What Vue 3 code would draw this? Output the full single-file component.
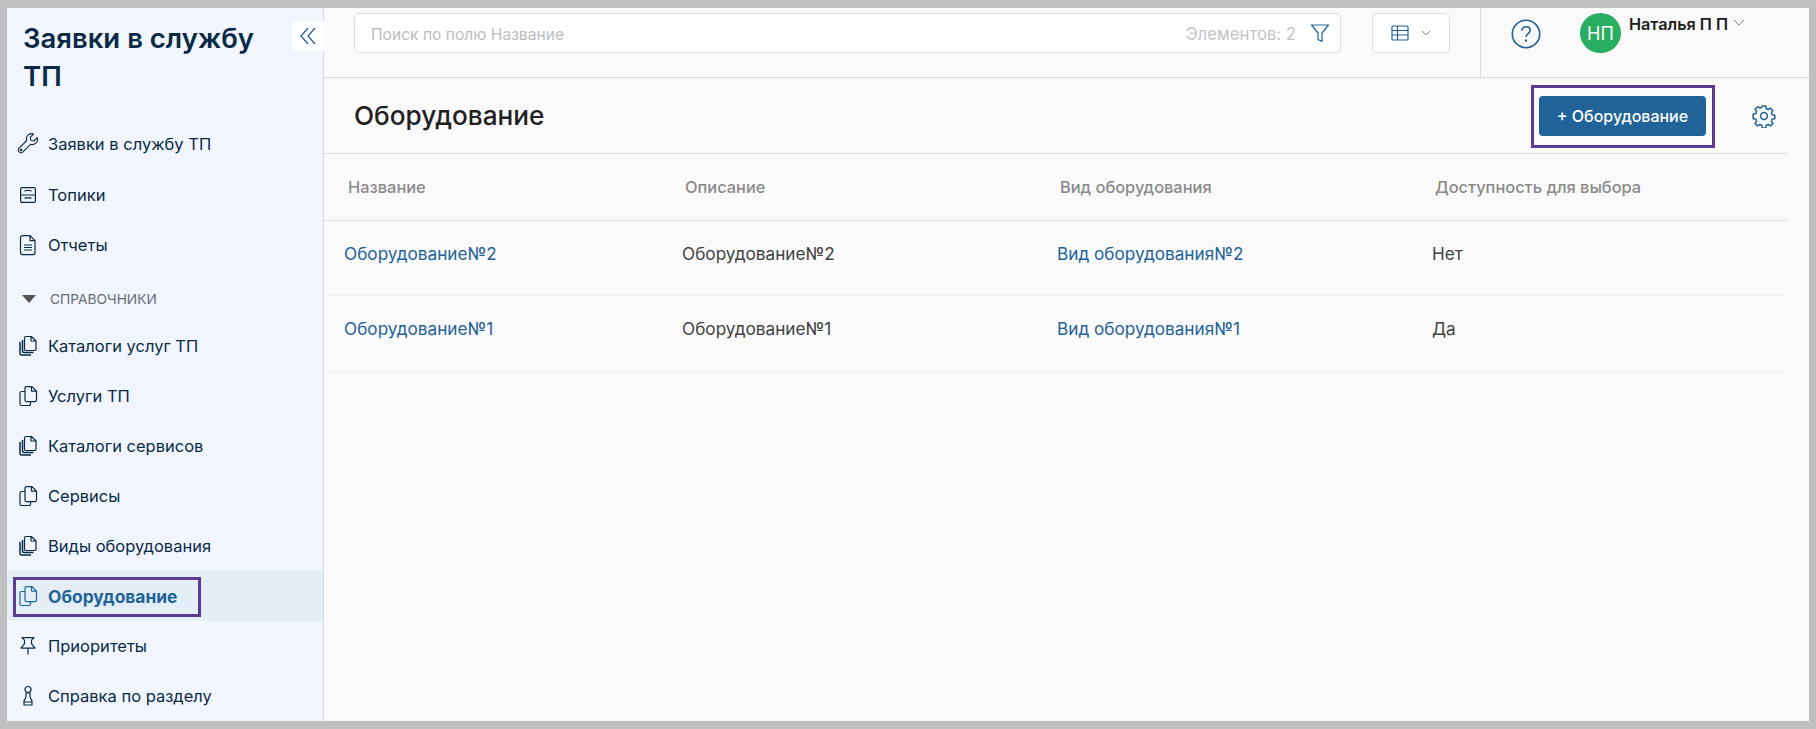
<script setup>
const nav = [
  { label: 'Заявки в службу ТП', icon: 'wrench' },
  { label: 'Топики', icon: 'cabinet' },
  { label: 'Отчеты', icon: 'doc' },
]
const refs = [
  { label: 'Каталоги услуг ТП', icon: 'stack' },
  { label: 'Услуги ТП', icon: 'copy' },
  { label: 'Каталоги сервисов', icon: 'stack' },
  { label: 'Сервисы', icon: 'copy' },
  { label: 'Виды оборудования', icon: 'stack' },
  { label: 'Оборудование', icon: 'copy', active: true },
  { label: 'Приоритеты', icon: 'pin' },
  { label: 'Справка по разделу', icon: 'pawn' },
]
const rows = [
  ['Оборудование№2', 'Оборудование№2', 'Вид оборудования№2', 'Нет'],
  ['Оборудование№1', 'Оборудование№1', 'Вид оборудования№1', 'Да'],
]
</script>

<template>
  <div class="frame">
    <div class="window">
      <aside class="sidebar">
        <h1 class="app-title">Заявки в службу ТП</h1>
        <button class="collapse" aria-label="Свернуть">
          <svg width="16" height="18" viewBox="0 0 16 18" fill="none" stroke="#1f6399" stroke-width="1.3"><path d="M8 1 1 9l7 8M15 1 8 9l7 8" /></svg>
        </button>
        <nav class="nav">
          <template v-for="group in [nav, null, refs]">
            <div v-if="!group" class="section">
              <span class="caret"></span>
              <span>СПРАВОЧНИКИ</span>
            </div>
            <a v-else v-for="item in group" :key="item.label" class="item" :class="{ active: item.active }">
              <span class="ico">
                <svg v-if="item.icon === 'wrench'" width="22" height="22" viewBox="0 0 22 22" fill="none" stroke="currentColor" stroke-width="1.1" stroke-linejoin="round">
                  <path d="M20.2 4.6 16.8 8l-2.9-.7-.7-2.9L16.600 1c-2.400-.7-4.800 0-6 1.500-1.200 1.500-1.500 3.300-.9 5L1.900 15.300a2.300 2.300 0 0 0 0 3.300l.5.5a2.300 2.300 0 0 0 3.300 0l7.800-7.800c1.700.6 3.500.3 5-.9 1.500-1.200 2.400-3.400 1.700-5.800z" />
                  <circle cx="4" cy="17" r=".8" />
                </svg>
                <svg v-else-if="item.icon === 'cabinet'" width="18" height="18" viewBox="0 0 18 18" fill="none" stroke="currentColor" stroke-width="1.200">
                  <rect x="1.600" y="1.600" width="14.800" height="14.800" rx="1.500" />
                  <path d="M1.600 9h14.800M6 4.500h6M6 4.500v1M12 4.500v1M6 11.800h6M6 11.800v1M12 11.800v1" />
                </svg>
                <svg v-else-if="item.icon === 'doc'" width="18" height="22" viewBox="0 0 18 22" fill="none" stroke="currentColor" stroke-width="1.200" stroke-linejoin="round">
                  <path d="M3.500 1.600h7.500l5 5v12a2 2 0 0 1-2 2h-10.500a2 2 0 0 1-2-2v-15a2 2 0 0 1 2-2zM11 1.600v5h5M5 11h8M5 13.500h8M5 16h8" />
                </svg>
                <svg v-else-if="item.icon === 'stack'" width="20" height="22" viewBox="0 0 20 22" fill="none" stroke="currentColor" stroke-width="1.500" stroke-linejoin="round">
                  <path d="M8 1.500h5.500l4.500 4.500v8a1.500 1.500 0 0 1-1.500 1.500H8A1.500 1.500 0 0 1 6.500 14V3A1.500 1.500 0 0 1 8 1.500zM13 1.500V6h5" stroke-width="1.200" />
                  <path d="M4.500 5v11a1.500 1.500 0 0 0 1.500 1.500h9.500" />
                  <path d="M2 7v11.500A1.500 1.500 0 0 0 3.500 20H13" />
                </svg>
                <svg v-else-if="item.icon === 'copy'" width="20" height="22" viewBox="0 0 20 22" fill="none" stroke="currentColor" stroke-width="1.200" stroke-linejoin="round">
                  <path d="M8.500 1.600h5.500l4.500 4.500v9a1.500 1.500 0 0 1-1.500 1.500h-8.500A1.500 1.500 0 0 1 7 15.100V3.100a1.500 1.500 0 0 1 1.500-1.500zM13.500 1.600v4.500h5" />
                  <path d="M7 6.500H3.500A1.500 1.500 0 0 0 2 8v11a1.500 1.500 0 0 0 1.500 1.500h7.500a1.500 1.500 0 0 0 1.500-1.500v-2.400" />
                </svg>
                <svg v-else-if="item.icon === 'pin'" width="18" height="20" viewBox="0 0 18 20" fill="none" stroke="currentColor" stroke-width="1.200" stroke-linejoin="round">
                  <path d="M3 1.600h12l-2.500 2.500v3.500l3.500 4.500H2l3.500-4.500V4.100zM9 12.100v6.500" />
                </svg>
                <svg v-else width="14" height="22" viewBox="0 0 14 22" fill="none" stroke="currentColor" stroke-width="1.200" stroke-linejoin="round">
                  <circle cx="7" cy="4.500" r="3" />
                  <path d="M4.500 8h5M5 8v3.500c0 1.500-1.200 3-2 4.500v4h8v-4c-.8-1.500-2-3-2-4.500V8M3 17h8" />
                </svg>
              </span>
              <span>{{ item.label }}</span>
              <span v-if="item.active" class="mark-item"></span>
            </a>
          </template>
        </nav>
      </aside>

      <main class="main">
        <header class="topbar">
          <div class="search">
            <span class="placeholder">Поиск по полю Название</span>
            <span class="count">Элементов: 2</span>
            <svg width="20" height="20" viewBox="0 0 20 20" fill="none" stroke="#1f6399" stroke-width="1.200" stroke-linejoin="round"><path d="M1.500 2h17l-6.500 8v8.500l-4-2V10z" /></svg>
          </div>
          <button class="view">
            <svg width="18" height="16" viewBox="0 0 18 16" fill="none" stroke="#1f6399" stroke-width="1.200"><rect x="1" y="1" width="16" height="14" rx="1" /><path d="M1 5.500h16M1 10h16M6.500 1v14" /></svg>
            <svg width="10" height="6" viewBox="0 0 10 6" fill="none" stroke="#8a8f94" stroke-width="1"><path d="m1 1 4 4 4-4" /></svg>
          </button>
          <div class="user-zone">
            <svg class="help" width="30" height="30" viewBox="0 0 30 30" fill="none" stroke="#1f6399" stroke-width="1.600">
              <circle cx="15" cy="15" r="13.700" />
              <path d="M10.800 11.800c0-2.600 2-4.100 4.300-4.100 2.400 0 4.100 1.500 4.100 3.600 0 3.300-4.200 3.300-4.200 6.800" />
              <path d="M15 20.500v2.300" stroke-width="2" />
            </svg>
            <div class="avatar">НП</div>
            <div class="username">Наталья П П</div>
            <svg class="uchev" width="12" height="7" viewBox="0 0 12 7" fill="none" stroke="#7d8389" stroke-width="1"><path d="m1 1 5 5 5-5" /></svg>
          </div>
        </header>

        <section class="head">
          <h2 class="page-title">Оборудование</h2>
          <div class="actions">
            <button class="primary">+ Оборудование<span class="mark-btn"></span></button>
            <svg width="24" height="24" viewBox="0 0 24 24" fill="none" stroke="#1f6399" stroke-width="1.500" stroke-linejoin="round">
              <circle cx="12" cy="12" r="3.400" />
              <path d="M10.200 2h3.600l.5 2.700 1.700.8 2.400-1.400 2.500 2.600-1.500 2.300.7 1.800 2.700.5v3.500l-2.700.5-.7 1.800 1.500 2.300-2.500 2.500-2.400-1.400-1.700.8-.5 2.700h-3.600l-.5-2.700-1.700-.8-2.400 1.400-2.500-2.500 1.500-2.300-.7-1.800-2.700-.5V9.900l2.700-.5.700-1.800L3.100 5.300 5.600 2.700 8 4.100l1.700-.8z" />
            </svg>
          </div>
        </section>

        <section class="table">
          <div class="row thead">
            <div>Название</div>
            <div>Описание</div>
            <div>Вид оборудования</div>
            <div>Доступность для выбора</div>
          </div>
          <div v-for="(r, i) in rows" :key="i" class="row tbody">
            <div class="link">{{ r[0] }}</div>
            <div>{{ r[1] }}</div>
            <div class="link">{{ r[2] }}</div>
            <div>{{ r[3] }}</div>
          </div>
        </section>
      </main>
    </div>
  </div>
</template>

<style>
html, body { margin: 0; background: #c0c0c0; }
</style>

<style scoped>
.frame { width: 1816px; height: 729px; box-sizing: border-box; padding: 8px 7px; background: #c0c0c0; font-family: Inter, "Noto Sans", sans-serif; overflow: hidden; }
.window { display: flex; height: 713px; background: #fafafa; }
.sidebar { position: relative; width: 317px; flex: none; box-sizing: border-box; background: #f1f6fe; border-right: 1px solid #d8d8d8; }
.app-title { margin: 0; padding: 11px 40px 0 16px; height: 111px; box-sizing: border-box; font-size: 27.500px; line-height: 38px; font-weight: 600; color: #0b2a45; }
.collapse { position: absolute; right: -1px; top: 13px; width: 32px; height: 30px; display: flex; align-items: center; justify-content: center; padding: 0; border: 0; background: #fff; border-radius: 4px 0 0 4px; }
.nav { display: flex; flex-direction: column; }
.item { position: relative; display: flex; align-items: center; box-sizing: border-box; height: 50px; color: #0b2a45; font-size: 16.500px; }
.item:first-child { height: 51px; padding-bottom: 1px; }
.ico { width: 41px; display: flex; justify-content: center; flex: none; }
.item.active { background: #e3eef7; color: #1f6399; font-size: 17.400px; font-weight: 700; }
.section { display: flex; align-items: center; height: 51px; color: #666d73; font-size: 13.750px; padding-left: 15px; padding-top: 6px; box-sizing: border-box; }
.caret { width: 0; height: 0; border-left: 7px solid transparent; border-right: 7px solid transparent; border-top: 8px solid #555; margin-right: 14px; }
.mark-item { position: absolute; left: 6px; top: 6px; width: 188px; height: 40px; box-sizing: border-box; border: 3px solid #5b3a91; }
.main { flex: 1; display: flex; flex-direction: column; min-width: 0; }
.topbar { display: flex; align-items: flex-start; height: 70px; box-sizing: border-box; border-bottom: 1px solid #dcdcdc; padding: 5px 0 0 30px; }
.search { width: 987px; height: 40px; box-sizing: border-box; display: flex; align-items: center; padding: 2px 10px 0 16px; background: #fff; border: 1px solid #ddd; border-radius: 5px; font-size: 15.600px; }
.search svg { margin-top: -2px; }
.placeholder { flex: 1; color: #bdbdbd; }
.count { color: #c4c4c4; margin-right: 14px; font-size: 16.700px; }
.view { margin-left: 31px; width: 78px; height: 40px; display: flex; align-items: center; justify-content: center; gap: 12px; background: #fff; border: 1px solid #ddd; border-radius: 5px; padding: 0; }
.user-zone { position: relative; margin-left: 30px; height: 69px; margin-top: -5px; width: 320px; border-left: 1px solid #dcdcdc; }
.help { position: absolute; left: 30px; top: 11px; }
.avatar { position: absolute; left: 99px; top: 5px; width: 41px; height: 40px; border-radius: 50%; background: #27ae60; color: #fff; font-size: 18px; display: flex; align-items: center; justify-content: center; }
.username { position: absolute; left: 148px; top: 6px; font-size: 16.200px; font-weight: 600; color: #1c1c1c; line-height: 20px; }
.uchev { position: absolute; left: 252px; top: 11px; }
.head { display: flex; align-items: center; justify-content: space-between; height: 75px; box-sizing: border-box; padding: 0 33px 0 30px; }
.page-title { margin: 0; font-size: 26.200px; font-weight: 500; color: #212121; }
.actions { display: flex; align-items: center; gap: 46px; }
.primary { position: relative; width: 167px; height: 40px; border: 0; border-radius: 4px; background: #1f6399; color: #fff; font: 500 16px Inter, sans-serif; padding: 0; }
.mark-btn { position: absolute; left: -8px; top: -11px; width: 184px; height: 63px; box-sizing: border-box; border: 3px solid #5b3a91; }
.table { margin-right: 22px; }
.row { display: grid; grid-template-columns: 338px 375px 375px 1fr; }
.thead { height: 66px; align-items: center; padding-left: 24px; grid-template-columns: 337px 375px 375px 1fr; border-top: 1px solid #dcdcdc; border-bottom: 1px solid #dcdcdc; color: #8a8a8a; font-size: 16.400px; font-weight: 500; }
.tbody { height: 75px; box-sizing: border-box; padding: 22px 0 0 20px; line-height: 21px; border-bottom: 1px solid #f2f2f2; color: #424242; font-size: 17.200px; }
.tbody:last-child { height: 77px; }
.link { color: #1f6399; }
</style>
